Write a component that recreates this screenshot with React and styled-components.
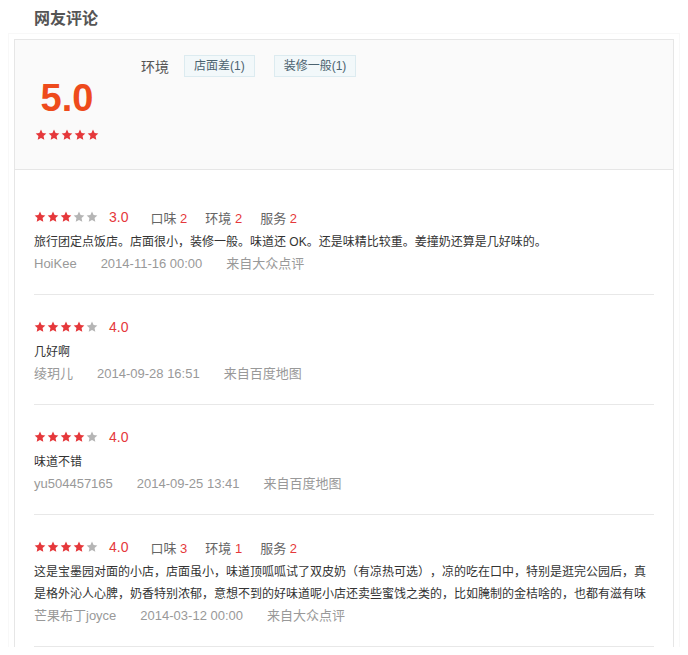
import React from "react";
import styled, { createGlobalStyle } from "styled-components";

const reviews = [
  {
    score: 3,
    ratings: [
      ["口味", 2],
      ["环境", 2],
      ["服务", 2],
    ],
    text: "旅行团定点饭店。店面很小，装修一般。味道还 OK。还是味精比较重。姜撞奶还算是几好味的。",
    user: "HoiKee",
    date: "2014-11-16 00:00",
    source: "来自大众点评",
  },
  {
    score: 4,
    ratings: [],
    text: "几好啊",
    user: "绫玥儿",
    date: "2014-09-28 16:51",
    source: "来自百度地图",
  },
  {
    score: 4,
    ratings: [],
    text: "味道不错",
    user: "yu504457165",
    date: "2014-09-25 13:41",
    source: "来自百度地图",
  },
  {
    score: 4,
    ratings: [
      ["口味", 3],
      ["环境", 1],
      ["服务", 2],
    ],
    text:
      "这是宝墨园对面的小店，店面虽小，味道顶呱呱试了双皮奶（有凉热可选），凉的吃在口中，特别是逛完公园后，真是格外沁人心脾，奶香特别浓郁，意想不到的好味道呢小店还卖些蜜饯之类的，比如腌制的金桔啥的，也都有滋有味",
    user: "芒果布丁joyce",
    date: "2014-03-12 00:00",
    source: "来自大众点评",
  },
];

const tags = ["店面差(1)", "装修一般(1)"];

const Star = ({ on }) => (
  <StarIcon viewBox="0 0 24 24" $on={on}>
    <path d="M12 1.2l3.2 6.9 7.5.9-5.6 5.1 1.5 7.5L12 17.8l-6.6 3.8 1.5-7.5L1.3 9l7.5-.9z" />
  </StarIcon>
);

const Stars = ({ value }) => (
  <StarRow>
    {[1, 2, 3, 4, 5].map((i) => (
      <Star key={i} on={i <= value} />
    ))}
  </StarRow>
);

const App = () => {
  // RENDER
  return (
    <Page>
      <GlobalStyle />
      <Title>网友评论</Title>
      <Frame>
        <Box>
          <Summary>
            <ScoreBlock>
              <BigScore>5.0</BigScore>
              <Stars value={5} />
            </ScoreBlock>
            <TagArea>
              <TagLabel>环境</TagLabel>
              {tags.map((t) => (
                <Tag key={t}>{t}</Tag>
              ))}
            </TagArea>
          </Summary>
          <ReviewList>
            {reviews.map((r, idx) => (
              <Review key={idx}>
                <ReviewHead>
                  <Stars value={r.score} />
                  <Score>{r.score.toFixed(1)}</Score>
                  {r.ratings.length > 0 && (
                    <Ratings>
                      {r.ratings.map(([name, val]) => (
                        <Rating key={name}>
                          {name} <em>{val}</em>
                        </Rating>
                      ))}
                    </Ratings>
                  )}
                </ReviewHead>
                <ReviewText>{r.text}</ReviewText>
                <Meta>
                  <span>{r.user}</span>
                  <span>{r.date}</span>
                  <span>{r.source}</span>
                </Meta>
              </Review>
            ))}
          </ReviewList>
        </Box>
      </Frame>
    </Page>
  );
};

export default App;

// STYLES

const GlobalStyle = createGlobalStyle`
  html, body {
    margin: 0;
    padding: 0;
    background: #fff;
  }
  body {
    font-family: "Liberation Sans", "Noto Sans CJK SC", sans-serif;
    color: #333;
    text-spacing-trim: space-all;
  }
`;

const Page = styled.div`
  width: 688px;
  height: 655px;
  overflow: hidden;
  padding: 8px 0 0 8px;
  box-sizing: border-box;
`;

const Title = styled.h2`
  margin: 0;
  padding-left: 26px;
  font-size: 16px;
  line-height: 22px;
  font-weight: 700;
  color: #555;
`;

const Frame = styled.div`
  margin-top: 3px;
  width: 672px;
  box-sizing: border-box;
  border: 1px solid #f8f8f8;
  border-bottom: none;
  padding: 5px 5px 0;
`;

const Box = styled.div`
  border: 1px solid #e6e6e6;
  border-bottom: none;
`;

const Summary = styled.div`
  display: flex;
  height: 130px;
  box-sizing: border-box;
  padding-left: 20px;
  background: #fafafa;
  border-bottom: 1px solid #e6e6e6;
`;

const ScoreBlock = styled.div`
  width: 64px;
  margin-top: 37px;
  display: flex;
  flex-direction: column;
  align-items: center;
`;

const BigScore = styled.div`
  font-size: 38px;
  line-height: 42px;
  font-weight: 700;
  color: #ee4b1c;
  margin-bottom: 10px;
`;

const StarRow = styled.span`
  display: inline-flex;
  gap: 1px;
  align-items: center;
`;

const StarIcon = styled.svg`
  width: 12px;
  height: 12px;
  fill: ${(p) => (p.$on ? "#e5383b" : "#b5b5b5")};
`;

const TagArea = styled.div`
  margin-left: 42px;
  margin-top: 15px;
  display: flex;
  align-items: center;
  height: 22px;
`;

const TagLabel = styled.span`
  font-size: 14px;
  color: #555;
  margin-right: 15px;
`;

const Tag = styled.span`
  display: inline-block;
  height: 22px;
  line-height: 20px;
  box-sizing: border-box;
  padding: 0 9px;
  font-size: 12px;
  color: #4b6370;
  background: #f2f8fa;
  border: 1px solid #dcebf0;
  margin-right: 19px;
`;

const ReviewList = styled.div`
  padding: 15px 19px 0;
`;

const Review = styled.div`
  padding: 22px 0 19px;
  border-bottom: 1px solid #e8e8e8;
`;

const ReviewHead = styled.div`
  display: flex;
  align-items: center;
  height: 20px;
  margin-bottom: 4px;
`;

const Score = styled.span`
  margin-left: 11px;
  font-size: 14px;
  color: #e5383b;
`;

const Ratings = styled.span`
  display: flex;
  margin-left: 22px;
`;

const Rating = styled.span`
  font-size: 13px;
  color: #666;
  margin-right: 18px;

  em {
    font-style: normal;
    color: #e5383b;
  }
`;

const ReviewText = styled.p`
  margin: 0;
  font-size: 12px;
  line-height: 22px;
  color: #333;
`;

const Meta = styled.div`
  display: flex;
  font-size: 13px;
  line-height: 22px;
  color: #999;

  span {
    margin-right: 24px;
  }
`;
